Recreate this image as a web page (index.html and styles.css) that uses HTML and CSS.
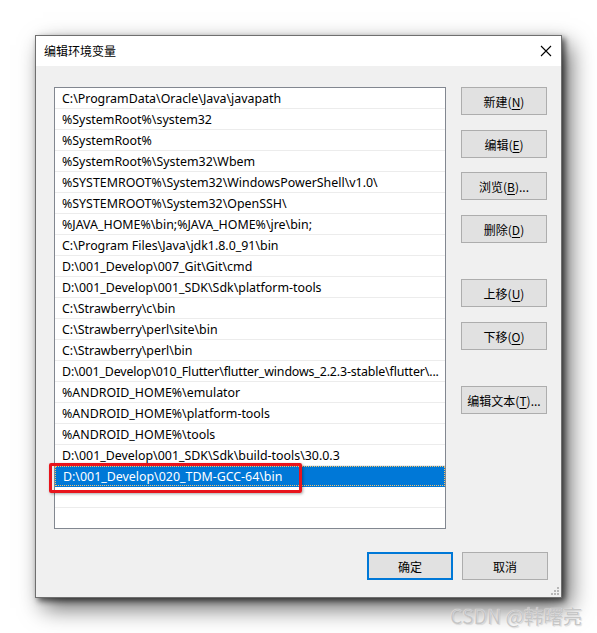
FILE: index.html
```html
<!DOCTYPE html>
<html lang="zh-CN">
<head>
<meta charset="utf-8">
<title>编辑环境变量</title>
<link rel="stylesheet" href="styles.css">
</head>
<body>
<div class="window">
  <div class="titlebar">
    <span class="title">编辑环境变量</span>
    <svg class="close" width="12" height="12" viewBox="0 0 12 12"><path d="M1 1 L11 11 M11 1 L1 11" stroke="#000" stroke-width="1.1" fill="none"/></svg>
  </div>
  <div class="content">
    <div class="main">
      <div class="list">
        <div class="row">C:\ProgramData\Oracle\Java\javapath</div>
        <div class="row">%SystemRoot%\system32</div>
        <div class="row">%SystemRoot%</div>
        <div class="row">%SystemRoot%\System32\Wbem</div>
        <div class="row">%SYSTEMROOT%\System32\WindowsPowerShell\v1.0\</div>
        <div class="row">%SYSTEMROOT%\System32\OpenSSH\</div>
        <div class="row">%JAVA_HOME%\bin;%JAVA_HOME%\jre\bin;</div>
        <div class="row">C:\Program Files\Java\jdk1.8.0_91\bin</div>
        <div class="row">D:\001_Develop\007_Git\Git\cmd</div>
        <div class="row">D:\001_Develop\001_SDK\Sdk\platform-tools</div>
        <div class="row">C:\Strawberry\c\bin</div>
        <div class="row">C:\Strawberry\perl\site\bin</div>
        <div class="row">C:\Strawberry\perl\bin</div>
        <div class="row tight">D:\001_Develop\010_Flutter\flutter_windows_2.2.3-stable\flutter\...</div>
        <div class="row">%ANDROID_HOME%\emulator</div>
        <div class="row">%ANDROID_HOME%\platform-tools</div>
        <div class="row">%ANDROID_HOME%\tools</div>
        <div class="row">D:\001_Develop\001_SDK\Sdk\build-tools\30.0.3</div>
        <div class="row selected"><span class="focus">D:\001_Develop\020_TDM-GCC-64\bin</span></div>
        <div class="row"></div>
        <div class="highlight"></div>
      </div>
      <div class="side">
        <button class="btn b-new">新建(<u>N</u>)</button>
        <button class="btn b-edit">编辑(<u>E</u>)</button>
        <button class="btn b-browse">浏览(<u>B</u>)...</button>
        <button class="btn b-del">删除(<u>D</u>)</button>
        <button class="btn b-up">上移(<u>U</u>)</button>
        <button class="btn b-down">下移(<u>O</u>)</button>
        <button class="btn b-text">编辑文本(<u>T</u>)...</button>
      </div>
    </div>
    <div class="footer">
      <button class="btn ok">确定</button>
      <button class="btn">取消</button>
    </div>
    <svg class="grip" width="10" height="10" viewBox="0 0 10 10">
      <rect x="8" y="2" width="2" height="2" fill="#b8b8b8"/>
      <rect x="5" y="5" width="2" height="2" fill="#b8b8b8"/>
      <rect x="8" y="5" width="2" height="2" fill="#b8b8b8"/>
      <rect x="2" y="8" width="2" height="2" fill="#b8b8b8"/>
      <rect x="5" y="8" width="2" height="2" fill="#b8b8b8"/>
      <rect x="8" y="8" width="2" height="2" fill="#b8b8b8"/>
    </svg>
  </div>
</div>
<div class="watermark">CSDN @韩曙亮</div>
</body>
</html>
```
FILE: styles.css
```css
* { box-sizing: border-box; }
html, body { margin: 0; padding: 0; background: #fff; }
body {
  width: 597px;
  height: 633px;
  position: relative;
  overflow: hidden;
  font-family: "Noto Sans", "Noto Sans CJK SC", sans-serif;
  font-size: 12px;
  color: #000;
}
.window {
  margin: 35px 0 0 35px;
  width: 527px;
  height: 563px;
  border: 1px solid #6f6f6f;
  background: #f0f0f0;
  box-shadow: 3px 3px 6px rgba(0,0,0,0.6), 8px 10px 22px rgba(0,0,0,0.6);
  display: flex;
  flex-direction: column;
}
.titlebar {
  height: 30px;
  background: #fff;
  display: flex;
  align-items: center;
  justify-content: space-between;
  padding: 0 8px 0 8px;
}
.title { font-family: "Noto Sans CJK SC", sans-serif; font-size: 12px; margin-top: -1px; }
.close { margin-right: 1px; }
.content {
  flex: 1;
  position: relative;
  padding: 21px 13px 0 18px;
  display: flex;
  flex-direction: column;
}
.main { display: flex; align-items: flex-start; }
.list {
  position: relative;
  width: 392px;
  height: 442px;
  background: #fff;
  border: 1px solid #828790;
}
.row {
  height: 21px;
  padding-top: 2px;
  line-height: 18px;
  font-size: 12.4px;
  border-bottom: 1px solid #ececec;
  padding-left: 7px;
  white-space: nowrap;
  overflow: hidden;
}
.row.tight { letter-spacing: -0.14px; }
.row.selected {
  background: #0078d7;
  color: #fff;
  border-bottom-color: #0078d7;
  padding: 0;
}
.focus {
  display: block;
  height: 20px;
  padding-left: 7px;
  padding-top: 1px;
  border: 1px dotted #f7c26a;
  line-height: 17px;
}
.highlight {
  position: absolute;
  left: -6px;
  top: 375px;
  width: 253px;
  height: 30px;
  border: 3px solid #e8141c;
  border-radius: 2px;
  box-shadow: 1px 1px 3px rgba(0,0,0,0.35);
}
.side {
  margin-left: 15px;
  width: 86px;
  display: flex;
  flex-direction: column;
}
.btn {
  width: 86px;
  height: 28px;
  background: #e1e1e1;
  border: 1px solid #adadad;
  font-family: "Noto Sans CJK SC", sans-serif;
  font-size: 12px;
  color: #000;
  padding: 0;
  margin: 0;
}
.btn u { text-decoration-thickness: 1px; text-underline-offset: 2px; }
.b-new { margin-top: 0; }
.b-edit { margin-top: 15px; }
.b-browse { margin-top: 14px; }
.b-del { margin-top: 15px; }
.b-up { margin-top: 36px; }
.b-down { margin-top: 15px; }
.b-text { margin-top: 36px; }
.footer {
  margin-top: 23px;
  display: flex;
  justify-content: flex-end;
  gap: 9px;
}
.btn.ok { border: 2px solid #0078d7; }
.grip { position: absolute; right: 2px; bottom: 2px; }
.watermark {
  position: absolute;
  left: 450px;
  top: 601px;
  font-family: "Noto Sans CJK SC", sans-serif;
  font-size: 19.5px;
  color: #c6c6c6;
  text-shadow: 0 0 1px #fff, 1px 1px 1px rgba(0,0,0,0.12);
}
```
